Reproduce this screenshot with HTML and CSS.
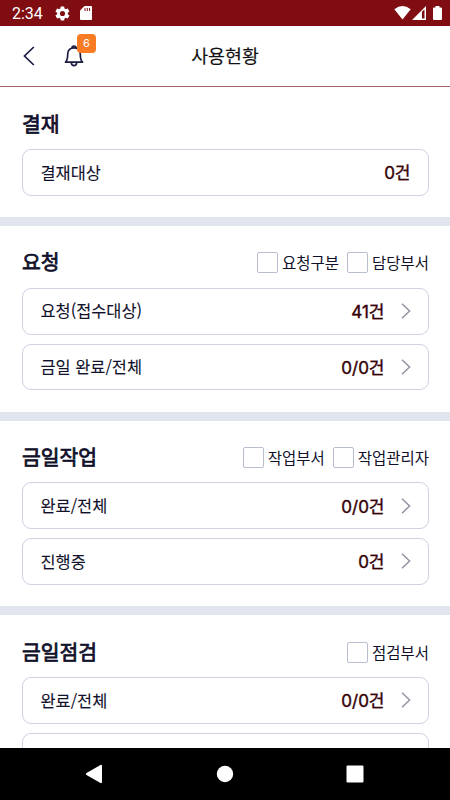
FILE: index.html
```html
<!DOCTYPE html>
<html lang="ko">
<head>
<meta charset="utf-8">
<title>사용현황</title>
<link rel="stylesheet" href="styles.css">
</head>
<body>
<div class="status">
  <span class="time">2:34</span>
  <svg class="gear" viewBox="0 0 24 24" width="17" height="17"><path fill="#fff" fill-rule="evenodd" d="M19.4 13a7.500 7.500 0 0 0 0-2l2.100-1.600c.2-.2.3-.4.1-.7l-2-3.400c-.1-.2-.4-.3-.6-.2l-2.500 1a7 7 0 0 0-1.700-1l-.4-2.600c0-.3-.2-.5-.5-.5h-4c-.3 0-.5.2-.5.5L9 5.100a7 7 0 0 0-1.700 1l-2.500-1c-.2-.1-.5 0-.6.2l-2 3.400c-.1.3-.1.500.1.7L4.500 11a7.500 7.500 0 0 0 0 2l-2.200 1.600c-.2.2-.2.4-.1.7l2 3.400c.1.2.4.3.6.2l2.500-1a7 7 0 0 0 1.700 1l.4 2.600c0 .3.200.5.500.5h4c.3 0 .5-.2.500-.5l.4-2.600a7 7 0 0 0 1.700-1l2.500 1c.2.1.5 0 .6-.2l2-3.400c.1-.3.1-.5-.1-.7zM12 15.600a3.600 3.600 0 1 1 0-7.200 3.600 3.600 0 0 1 0 7.200z"/></svg>
  <svg class="sd" viewBox="0 0 12 14" width="12" height="14"><path fill="#fff" d="M4.500 0H11q1 0 1 1v12q0 1-1 1H1q-1 0-1-1V4.500z"/><path stroke="#7f0d12" d="M5 2v3M7.300 2v3M9.600 2v3"/></svg>
  <span class="spacer"></span>
  <svg class="wifi" viewBox="0 0 17 14" width="17" height="14"><path fill="#fff" d="M.3 3.300Q8.500-3.200 16.700 3.300L8.500 13.500z"/></svg>
  <svg class="signal" viewBox="0 0 14 14" width="14" height="14"><path fill="#fff" fill-rule="evenodd" d="M14 0v14H0zM10 5.500v7h2.500v-9z"/></svg>
  <svg class="battery" viewBox="0 0 9 14" width="9" height="14"><path fill="#fff" d="M2.500 0h4v1.400H8q1 0 1 1V13q0 1-1 1H1q-1 0-1-1V2.400q0-1 1-1h1.500z"/></svg>
</div>
<header class="header">
  <svg class="back" viewBox="0 0 12 20" width="12" height="20"><path d="M10.800 1 1.500 10l9.300 9"/></svg>
  <div class="bell-wrap">
    <svg class="bell" viewBox="0 0 20 22" width="20" height="22"><path d="M1.500 17.200h17c-2-2-2.200-3.200-2.200-8C16.300 5 13.500 2.800 10 2.800S3.700 5 3.700 9.200c0 4.800-.2 6-2.200 8zM8 2.800q0-1.800 2-1.800t2 1.800M7.300 17.600q.3 3 2.700 3t2.700-3"/></svg>
    <span class="badge">6</span>
  </div>
  <h1 class="title">사용현황</h1>
</header>
<main class="content">
  <section class="section">
    <div class="head"><h2>결재</h2></div>
    <div class="card"><span>결재대상</span><b class="count">0건</b></div>
  </section>
  <section class="section">
    <div class="head"><h2>요청</h2><span class="check"><i></i>요청구분</span><span class="check"><i></i>담당부서</span></div>
    <div class="card"><span>요청(접수대상)</span><b class="count">41건</b><svg class="arrow" viewBox="0 0 10 16" width="10" height="16"><path d="M1 .8 8.600 8 1 15.200"/></svg></div>
    <div class="card"><span>금일 완료/전체</span><b class="count">0/0건</b><svg class="arrow" viewBox="0 0 10 16" width="10" height="16"><path d="M1 .8 8.600 8 1 15.200"/></svg></div>
  </section>
  <section class="section">
    <div class="head"><h2>금일작업</h2><span class="check"><i></i>작업부서</span><span class="check"><i></i>작업관리자</span></div>
    <div class="card"><span>완료/전체</span><b class="count">0/0건</b><svg class="arrow" viewBox="0 0 10 16" width="10" height="16"><path d="M1 .8 8.600 8 1 15.200"/></svg></div>
    <div class="card"><span>진행중</span><b class="count">0건</b><svg class="arrow" viewBox="0 0 10 16" width="10" height="16"><path d="M1 .8 8.600 8 1 15.200"/></svg></div>
  </section>
  <section class="section">
    <div class="head"><h2>금일점검</h2><span class="check"><i></i>점검부서</span></div>
    <div class="card"><span>완료/전체</span><b class="count">0/0건</b><svg class="arrow" viewBox="0 0 10 16" width="10" height="16"><path d="M1 .8 8.600 8 1 15.200"/></svg></div>
    <div class="card"></div>
  </section>
</main>
<nav class="nav">
  <svg viewBox="0 0 18 20" width="18" height="20"><path fill="#fff" d="M1.500 9 15.500 1q1.500-.6 1.500 1v16q0 1.600-1.500 1L1.500 11q-1.500-1 0-2z"/></svg>
  <svg viewBox="0 0 18 18" width="18" height="18"><circle cx="9" cy="9" r="8.200" fill="#fff"/></svg>
  <svg viewBox="0 0 18 18" width="18" height="18"><rect x=".5" y=".5" width="17" height="17" rx="1.200" fill="#fff"/></svg>
</nav>
</body>
</html>
```
FILE: styles.css
```css
* { box-sizing: border-box; }
body {
  margin: 0;
  height: 800px;
  overflow: hidden;
  display: flex;
  flex-direction: column;
  background: #fff;
  color: #11112b;
  font-family: "Noto Sans CJK KR", sans-serif;
}
svg { display: block; flex: none; }
.status {
  flex: none;
  height: 26px;
  padding: 0 8px 0 12px;
  display: flex;
  align-items: center;
  background: #7f0d12;
  color: #fff;
}
.time { width: 31px; font: 400 16px/26px Roboto, sans-serif; padding-top: 2px; }
.gear { margin-left: 11px; }
.sd { margin-left: 9px; }
.spacer { flex: 1; }
.signal { margin-left: 1px; }
.battery { margin-left: 7px; }
.header {
  position: relative;
  flex: none;
  height: 61px;
  display: flex;
  align-items: center;
  padding-left: 23px;
  border-bottom: 1px solid #a46265;
}
.back path, .bell path { fill: none; stroke: #1b1b42; stroke-width: 1.7; }
.bell-wrap { position: relative; margin-left: 29px; }
.bell path { stroke-linejoin: round; }
.badge {
  position: absolute;
  left: 13px;
  top: -11px;
  width: 19px;
  height: 19px;
  border-radius: 4px;
  background: #f97c24;
  color: #fff;
  font: 400 11px/19px Inter, sans-serif;
  text-align: center;
}
.title {
  position: absolute;
  left: 0;
  right: 0;
  top: 0;
  margin: 0;
  font-size: 18.4px;
  line-height: 58px;
  font-weight: 400;
  -webkit-text-stroke: 0.15px currentColor;
  text-align: center;
  color: #111;
}
.content { flex: 1; min-height: 0; overflow: hidden; }
.section {
  padding: 0 21px 21.200px 22px;
  border-bottom: 9px solid #e1e5ed;
}
.head {
  height: 53px;
  padding-top: 20px;
  margin-bottom: 8.900px;
  display: flex;
  align-items: center;
}
h2 {
  flex: 1;
  margin: 0;
  padding-bottom: 2px;
  font-size: 20.4px;
  line-height: 32px;
  font-weight: 400;
  -webkit-text-stroke: 0.75px currentColor;
}
.check {
  display: flex;
  align-items: center;
  height: 22px;
  margin: 0 0 0 8px;
  font-size: 15.500px;
  line-height: 20px;
}
.check i { width: 21px; height: 21px; margin: 1px 4px 0 0; border: 1px solid #b8bdd0; border-radius: 2px; }
.card {
  height: 46.800px;
  padding: 0 17.500px 1.500px 17.500px;
  display: flex;
  align-items: center;
  border: 1px solid #ced2e2;
  border-radius: 9px;
  font-size: 16.400px;
  -webkit-text-stroke: 0.1px currentColor;
}
.card + .card { margin-top: 9px; }
.count {
  margin-left: auto;
  font-family: Inter, "Noto Sans CJK KR", sans-serif;
  font-size: 17px;
  font-weight: 400;
  -webkit-text-stroke: 0.4px currentColor;
  color: #350006;
}
.arrow { margin: 1px 0 0 16px; }
.arrow path { fill: none; stroke: #9294a1; stroke-width: 1.500; }
.nav {
  flex: none;
  height: 52.500px;
  padding: 0 86px 0 85px;
  display: flex;
  justify-content: space-between;
  align-items: center;
  background: #000;
}
```
